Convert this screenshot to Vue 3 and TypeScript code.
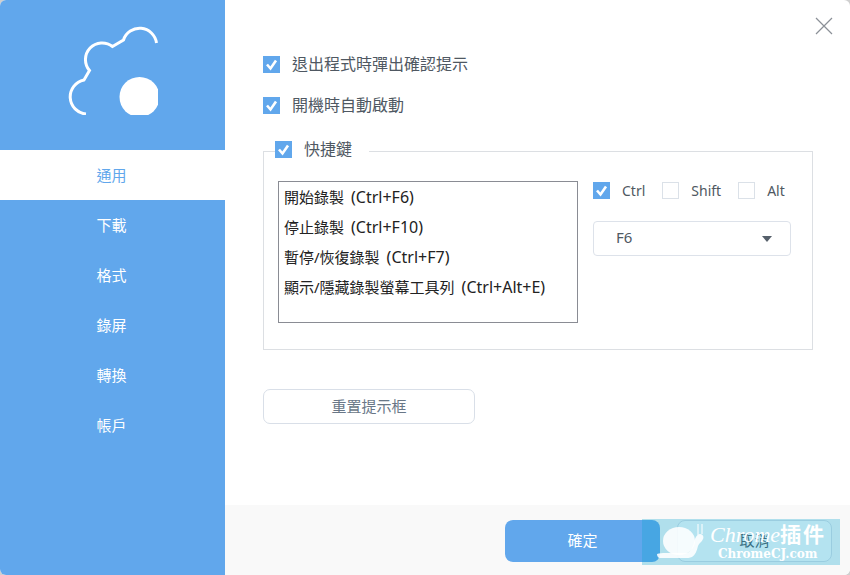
<template>
  <div class="window">
    <aside class="sidebar">
      <div class="logo">
        <svg width="90" height="90" viewBox="0 0 90 90" fill="none">
          <path d="M18 89A17.200 17.200 0 0 1 16 55L21.500 45.500A16.700 16.700 0 0 1 44.500 21.500L55.500 15A17 17 0 0 1 88.500 18" stroke="#fff" stroke-width="3"/>
          <circle cx="71.500" cy="72" r="20" fill="#fff"/>
        </svg>
      </div>
      <nav class="nav">
        <div
          v-for="item in navItems"
          :key="item"
          class="nav-item"
          :class="{ active: item === activeNav }"
          @click="activeNav = item"
        >
          {{ item }}
        </div>
      </nav>
    </aside>

    <main class="main">
      <button class="close-btn">
        <svg width="18" height="18" viewBox="0 0 18 18" fill="none">
          <path d="M1 1l16 16M17 1L1 17" stroke="#8b9097" stroke-width="1.2"/>
        </svg>
      </button>

      <div class="content">
        <label class="option">
          <span class="check on"><svg width="17" height="17" viewBox="0 0 17 17" fill="none"><path d="M4 8.500l3.500 4L13 4.500" stroke="#fff" stroke-width="2.600"/></svg></span>
          <span class="label-text">退出程式時彈出確認提示</span>
        </label>
        <label class="option">
          <span class="check on"><svg width="17" height="17" viewBox="0 0 17 17" fill="none"><path d="M4 8.500l3.500 4L13 4.500" stroke="#fff" stroke-width="2.600"/></svg></span>
          <span class="label-text">開機時自動啟動</span>
        </label>

        <fieldset class="hotkeys">
          <legend class="hotkeys-legend">
            <span class="check on"><svg width="17" height="17" viewBox="0 0 17 17" fill="none"><path d="M4 8.500l3.500 4L13 4.500" stroke="#fff" stroke-width="2.600"/></svg></span>
            <span class="legend-text">快捷鍵</span>
          </legend>
          <div class="hotkeys-body">
            <ul class="shortcut-list">
              <li v-for="row in shortcuts" :key="row.name">
                {{ row.name }}<span class="keys">({{ row.keys }})</span>
              </li>
            </ul>
            <div class="hotkeys-side">
              <div class="mods">
                <label v-for="mod in mods" :key="mod.name" class="mod">
                  <span class="check" :class="{ on: mod.on }">
                    <svg v-if="mod.on" width="17" height="17" viewBox="0 0 17 17" fill="none"><path d="M4 8.500l3.500 4L13 4.500" stroke="#fff" stroke-width="2.600"/></svg>
                  </span>
                  {{ mod.name }}
                </label>
              </div>
              <div class="select">
                <span>F6</span>
                <i class="caret"></i>
              </div>
            </div>
          </div>
        </fieldset>

        <button class="reset-btn">重置提示框</button>
      </div>

      <footer class="footer">
        <button class="btn primary">確定</button>
        <button class="btn ghost">取消</button>
      </footer>
    </main>

    <!-- site watermark stamped over the screenshot -->
    <div class="watermark">
      <svg class="snail" width="50" height="38" viewBox="0 0 50 38" fill="none">
        <g fill="#fff" fill-opacity=".88">
          <ellipse cx="22" cy="19" rx="16" ry="14"/>
          <path d="M0 32c2-1 6-1 8-1h22c3-1 6-5 7-11 1-4 3-8 6-8 3 0 4 3 3 5-1 3-4 4-5 7-1 5-3 9-6 11-2 1-5 1-8 1H3C1 36 0 34 0 32z"/>
        </g>
        <path d="M41 13V2M45 12V2" stroke="#fff" stroke-width="1"/>
      </svg>
      <div class="mark-text">
        <div class="mark-top"><em>Chrome</em><b>插件</b></div>
        <div class="mark-bottom">ChromeCJ.com</div>
      </div>
    </div>
  </div>
</template>

<script setup lang="ts">
import { ref } from 'vue'

const navItems = ['通用', '下載', '格式', '錄屏', '轉換', '帳戶']
const activeNav = ref('通用')

const shortcuts = [
  { name: '開始錄製', keys: 'Ctrl+F6' },
  { name: '停止錄製', keys: 'Ctrl+F10' },
  { name: '暫停/恢復錄製', keys: 'Ctrl+F7' },
  { name: '顯示/隱藏錄製螢幕工具列', keys: 'Ctrl+Alt+E' }
]

const mods = [
  { name: 'Ctrl', on: true },
  { name: 'Shift', on: false },
  { name: 'Alt', on: false }
]
</script>

<style>
html,
body {
  margin: 0;
  background: #cfcfcf;
}
</style>

<style scoped>
.window {
  position: relative;
  width: 850px;
  height: 575px;
  display: flex;
  overflow: hidden;
  border-radius: 6px;
  background: #fff;
  font-family: "Noto Sans", "Noto Sans CJK TC", sans-serif;
  color: #4f5862;
}

.sidebar {
  width: 225px;
  flex: none;
  background: #61a7ec;
}

.logo {
  height: 150px;
  box-sizing: border-box;
  padding: 25px 0 0 68px;
}

.logo svg {
  display: block;
}

.nav-item {
  height: 50px;
  box-sizing: border-box;
  padding: 0 2px 2px 0;
  display: flex;
  align-items: center;
  justify-content: center;
  font-size: 15px;
  color: #fff;
  cursor: pointer;
}

.nav-item.active {
  background: #fff;
  color: #61a7ec;
}

.main {
  position: relative;
  flex: 1;
  display: flex;
  flex-direction: column;
}

.close-btn {
  position: absolute;
  top: 17px;
  right: 17px;
  width: 18px;
  height: 18px;
  padding: 0;
  border: none;
  background: none;
  cursor: pointer;
}

.close-btn svg {
  display: block;
}

.content {
  flex: 1;
  padding: 52px 37px 0 38px;
}

.option {
  display: flex;
  align-items: center;
  gap: 12px;
  height: 24px;
  margin-bottom: 17px;
  font-size: 16px;
}

.label-text {
  margin-top: -2px;
}

.check {
  width: 17px;
  height: 17px;
  flex: none;
  box-sizing: border-box;
  border: 1px solid #dbe1e8;
  background: #fff;
}

.check.on {
  border: none;
  background: #61a7ec;
}

.check svg {
  display: block;
}

.hotkeys {
  margin: 22px 0 0;
  padding: 0;
  height: 211px;
  box-sizing: border-box;
  border: 1px solid #dcdfe3;
}

.hotkeys-legend {
  display: flex;
  align-items: center;
  gap: 12px;
  height: 24px;
  margin-left: 11px;
  padding: 0 17px 0 0;
  font-size: 16px;
}

.hotkeys-legend .check {
  margin-top: -3px;
}

.legend-text {
  margin-top: -6px;
}

.hotkeys-body {
  display: flex;
  gap: 15px;
  padding: 18px 0 0 14px;
}

.shortcut-list {
  width: 300px;
  height: 142px;
  box-sizing: border-box;
  margin: 0;
  padding: 0 5px;
  list-style: none;
  border: 1px solid #8a8c94;
  font-size: 15px;
  color: #222;
}

.shortcut-list li {
  height: 30px;
  line-height: 30px;
  white-space: nowrap;
}

.keys {
  margin-left: 7px;
  font-size: 16px;
}

.hotkeys-side {
  width: 198px;
}

.mods {
  display: flex;
  gap: 17px;
  height: 19px;
}

.mod {
  display: flex;
  align-items: center;
  gap: 12px;
  font-size: 14px;
}

.select {
  display: flex;
  align-items: center;
  justify-content: space-between;
  height: 35px;
  box-sizing: border-box;
  margin-top: 21px;
  padding: 0 18px 4px 22px;
  border: 1px solid #dde2ea;
  border-radius: 4px;
  font-size: 15px;
}

.caret {
  width: 0;
  height: 0;
  margin-top: 4px;
  border-left: 5px solid transparent;
  border-right: 5px solid transparent;
  border-top: 6px solid #56606b;
}

.reset-btn {
  display: block;
  width: 212px;
  height: 35px;
  margin-top: 39px;
  padding: 0 0 2px;
  background: #fff;
  border: 1px solid #d9dfe8;
  border-radius: 7px;
  font: inherit;
  font-size: 15px;
  color: #697787;
  cursor: pointer;
}

.footer {
  height: 70px;
  box-sizing: border-box;
  display: flex;
  justify-content: flex-end;
  gap: 17px;
  padding: 15px 18px 0 0;
  background: #f9f9f9;
}

.btn {
  width: 155px;
  height: 42px;
  padding: 0 0 3px;
  border-radius: 8px;
  font: inherit;
  font-size: 15px;
  cursor: pointer;
}

.btn.primary {
  border: none;
  background: #61a7ec;
  color: #fff;
}

.btn.ghost {
  border: 1px solid #d9dfe8;
  background: #fff;
  color: #4f5862;
}

.watermark {
  position: absolute;
  left: 642px;
  top: 519px;
  width: 198px;
  height: 46px;
  display: flex;
  background: rgba(13, 165, 206, 0.31);
  color: #fff;
  pointer-events: none;
}

.snail {
  flex: none;
  margin: 3px 0 0 15px;
}

.mark-text {
  margin-left: 3px;
}

.mark-top {
  height: 28px;
  line-height: 30px;
  white-space: nowrap;
}

.mark-top em {
  font-family: "Liberation Serif", serif;
  font-size: 22px;
}

.mark-top b {
  font-size: 21px;
  letter-spacing: 2px;
}

.mark-bottom {
  margin-left: 8px;
  font-family: "DejaVu Serif", serif;
  font-size: 12px;
  font-weight: 700;
  line-height: 14px;
  white-space: nowrap;
}
</style>
